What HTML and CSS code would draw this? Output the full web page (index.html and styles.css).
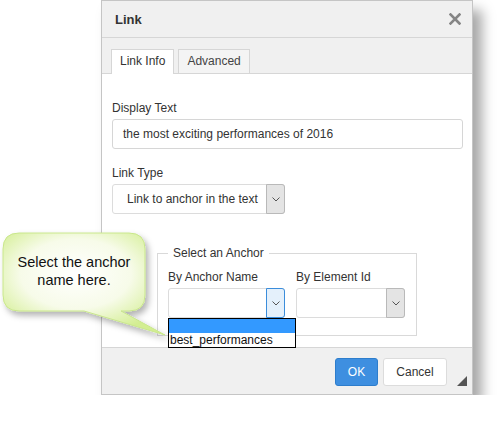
FILE: index.html
```html
<!DOCTYPE html>
<html lang="en">
<head>
  <meta charset="UTF-8">
  <title>Link</title>
  <link rel="stylesheet" href="styles.css">
</head>
<body>

  <div class="dialog">
    <div class="dialog-head">
      <span class="dialog-title">Link</span>
      <svg class="close-icon" width="12" height="12" viewBox="0 0 12 12">
        <path d="M1.5 1.5 L10.5 10.5 M10.5 1.5 L1.5 10.5" stroke="#858585" stroke-width="2.6" stroke-linecap="square"/>
      </svg>
    </div>

    <div class="tabs">
      <div class="tab active">Link Info</div>
      <div class="tab">Advanced</div>
    </div>

    <div class="dialog-body">
      <div class="field-label">Display Text</div>
      <div class="text-input">the most exciting performances of 2016</div>

      <div class="field-label">Link Type</div>
      <div class="select select-type">
        <span class="select-value">Link to anchor in the text</span>
        <span class="select-arrow">
          <svg width="8" height="5" viewBox="0 0 8 5"><path d="M0.5 0.5 L4 4 L7.5 0.5" fill="none" stroke="#555" stroke-width="1"/></svg>
        </span>
      </div>

      <fieldset class="anchor-box">
        <legend>Select an Anchor</legend>
        <div class="anchor-cols">
          <div class="anchor-col col-name">
            <div class="field-label">By Anchor Name</div>
            <div class="select focused">
              <span class="select-value"></span>
              <span class="select-arrow">
                <svg width="8" height="5" viewBox="0 0 8 5"><path d="M0.5 0.5 L4 4 L7.5 0.5" fill="none" stroke="#555" stroke-width="1"/></svg>
              </span>
            </div>
            <ul class="dropdown">
              <li class="highlighted">&nbsp;</li>
              <li>best_performances</li>
            </ul>
          </div>
          <div class="anchor-col col-id">
            <div class="field-label">By Element Id</div>
            <div class="select">
              <span class="select-value"></span>
              <span class="select-arrow">
                <svg width="8" height="5" viewBox="0 0 8 5"><path d="M0.5 0.5 L4 4 L7.5 0.5" fill="none" stroke="#555" stroke-width="1"/></svg>
              </span>
            </div>
          </div>
        </div>
      </fieldset>
    </div>

    <div class="dialog-foot">
      <button class="btn btn-ok">OK</button>
      <button class="btn">Cancel</button>
      <span class="resize-grip"></span>
    </div>
  </div>

  <!-- hint balloon over the dialog -->
  <div class="callout">
    <svg class="callout-shape" width="180" height="130" viewBox="0 0 180 130">
      <defs>
        <radialGradient id="calloutFill" cx="0.45" cy="0.4" r="0.62">
          <stop offset="0" stop-color="#ffffff"/>
          <stop offset="0.55" stop-color="#f7fbe9"/>
          <stop offset="1" stop-color="#d3ee92"/>
        </radialGradient>
        <filter id="calloutShadow" x="-20%" y="-20%" width="150%" height="150%">
          <feDropShadow dx="3" dy="4" stdDeviation="3" flood-color="#000" flood-opacity="0.3"/>
        </filter>
      </defs>
      <path d="M19 13 H129 Q145 13 145 29 V75 Q145 91 129 91 H121 L165 115 L84 91 H19 Q3 91 3 75 V29 Q3 13 19 13 Z"
            fill="url(#calloutFill)" stroke="#c9e78c" stroke-width="1" filter="url(#calloutShadow)"/>
    </svg>
    <div class="callout-text">Select the anchor<br>name here.</div>
  </div>

</body>
</html>
```

FILE: styles.css
```css
body {
  margin: 0;
  background: #fff;
  font-family: "Liberation Sans", Arial, sans-serif;
  font-size: 12px;
  color: #333;
}

.dialog {
  margin-left: 101px;
  width: 370px;
  border: 1px solid #c5c5c5;
  background: #fff;
  box-shadow: 9px 10px 12px rgba(0, 0, 0, 0.35);
}

.dialog-head {
  height: 36px;
  display: flex;
  align-items: center;
  justify-content: space-between;
  padding: 0 11px 0 13px;
  background: #f0f0f0;
  border-bottom: 1px solid #d6d6d6;
}
.dialog-title {
  font-size: 13px;
  font-weight: bold;
  color: #333;
}
.close-icon {
  display: block;
  margin-top: 0;
}

.tabs {
  display: flex;
  gap: 4px;
  padding: 11px 0 0 9px;
  background: #f0f0f0;
  border-bottom: 1px solid #d6d6d6;
}
.tab {
  height: 23px;
  line-height: 23px;
  padding: 0 8px;
  border: 1px solid #d6d6d6;
  border-bottom: none;
  background: #f4f4f4;
  color: #444;
}
.tab.active {
  background: #fff;
  height: 24px;
  margin-bottom: -1px;
  color: #333;
}

.dialog-body {
  height: 273px;
  box-sizing: border-box;
  padding: 26px 9px 0 10px;
}
.field-label {
  line-height: 16px;
  margin-bottom: 3px;
}
.text-input {
  height: 30px;
  box-sizing: border-box;
  border: 1px solid #d6d6d6;
  border-radius: 3px;
  padding: 0 10px;
  line-height: 28px;
  margin-bottom: 16px;
}

.select {
  display: flex;
  height: 30px;
  box-sizing: border-box;
  border: 1px solid #dcdcdc;
  border-radius: 3px;
  background: #fff;
}
.select-value {
  flex: 1;
  line-height: 28px;
  padding-left: 14px;
  white-space: nowrap;
}
.select-arrow {
  width: 17px;
  margin: -1px -1px -1px 0;
  display: flex;
  align-items: center;
  justify-content: center;
  background: #e4e4e4;
  border: 1px solid #b9b9b9;
  border-radius: 0 3px 3px 0;
}
.select-arrow svg {
  display: block;
}
.select.focused .select-arrow {
  background: #e4f0fb;
  border-color: #3b8ddb;
}
.select-type {
  width: 173px;
}

.anchor-box {
  margin: 31px 0 0 45px;
  width: 260px;
  box-sizing: border-box;
  border: 1px solid #d9d9d9;
  padding: 8px 11px 17px 10px;
}
.anchor-box legend {
  padding: 0 5px;
  line-height: 16px;
}
.anchor-cols {
  display: flex;
  gap: 11px;
}
.col-name {
  width: 117px;
  position: relative;
}
.col-id {
  width: 109px;
}

.dropdown {
  position: absolute;
  top: 100%;
  left: 0;
  width: 128px;
  box-sizing: border-box;
  margin: 0;
  padding: 0;
  list-style: none;
  background: #fff;
  border: 1px solid #000;
  z-index: 2;
}
.dropdown li {
  height: 14px;
  line-height: 14px;
  padding-left: 1px;
  color: #111;
}
.dropdown li.highlighted {
  background: #3399ff;
}

.dialog-foot {
  position: relative;
  height: 47px;
  box-sizing: border-box;
  display: flex;
  justify-content: flex-end;
  align-items: flex-start;
  gap: 5px;
  padding: 10px 25px 0 0;
  background: #f0f0f0;
  border-top: 1px solid #d6d6d6;
}
.btn {
  height: 28px;
  border: 1px solid #dcdcdc;
  border-radius: 3px;
  background: #fff;
  font-family: "Liberation Sans", Arial, sans-serif;
  font-size: 12px;
  color: #333;
  padding: 0 12px;
}
.btn-ok {
  width: 43px;
  padding: 0;
  background: #3e8fe0;
  border-color: #2d7dcc;
  color: #fff;
}
.btn:not(.btn-ok) {
  width: 64px;
}
.resize-grip {
  position: absolute;
  right: 5px;
  bottom: 8px;
  width: 0;
  height: 0;
  border-left: 10px solid transparent;
  border-bottom: 10px solid #555;
}

.callout {
  position: absolute;
  left: 0;
  top: 220px;
  width: 180px;
  height: 130px;
  z-index: 5;
}
.callout-shape {
  display: block;
}
.callout-text {
  position: absolute;
  left: 3px;
  top: 33px;
  width: 142px;
  text-align: center;
  font-size: 14.5px;
  line-height: 18px;
  color: #111;
}
```
